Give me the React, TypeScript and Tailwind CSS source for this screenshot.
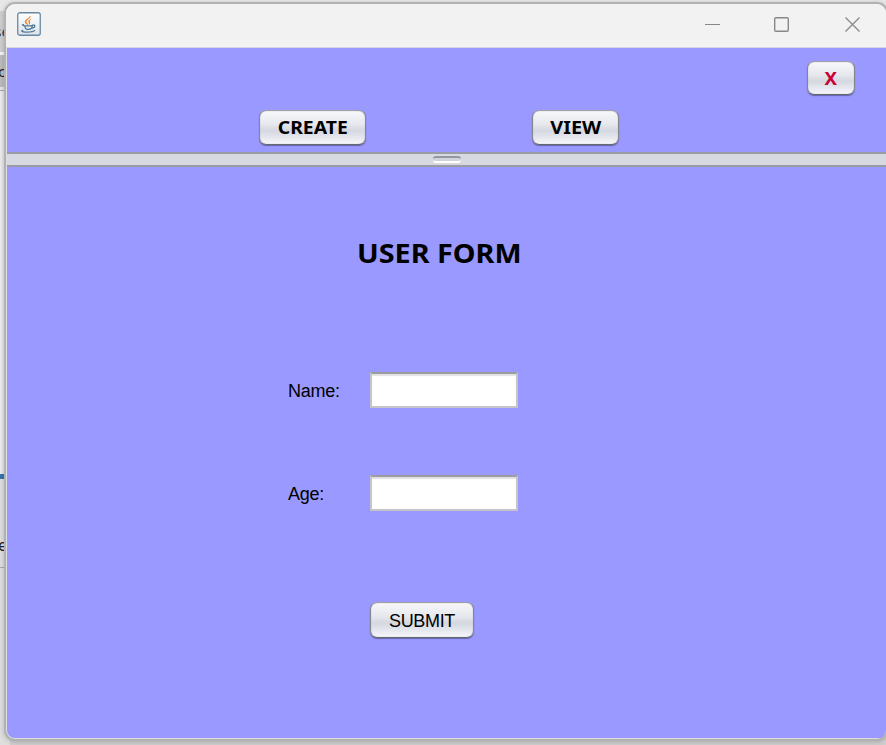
import React from "react";

const bevel =
  "flex items-center justify-center rounded-[7px] border-[1.5px] border-[#85878f] border-t-[#a0a1a8] border-b-[#666870] bg-[linear-gradient(180deg,#f8f8fa_0%,#e6e8ed_40%,#d5d8df_58%,#d9dce3_66%,#f5f7fc_100%)] shadow-[0_1px_1px_rgba(50,50,90,0.5),inset_0_0_1px_#9698a0] whitespace-nowrap text-black";
const tahoma = "font-['Noto_Sans',sans-serif] font-bold";
const arial = "font-['Liberation_Sans',Arial,sans-serif]";

function JavaIcon() {
  return (
    <svg width="24" height="24" viewBox="0 0 24 24" fill="none">
      <defs>
        <linearGradient id="tile" x1="0" y1="0" x2="0" y2="1">
          <stop offset="0" stopColor="#fff" />
          <stop offset="1" stopColor="#dce3e8" />
        </linearGradient>
      </defs>
      <rect x=".75" y=".75" width="22.5" height="22.5" rx="2" fill="url(#tile)" stroke="#6888a2" strokeWidth="1.3" />
      <path d="M13.300 4c.5 3-4.600 3.400-4 6 .2 1.100 1.300 1.700 1.600 2.700-2-1-3.300-2.100-2.700-3.800C8.800 7.200 12.500 6.600 13.300 4Z" fill="#ed7d28" stroke="#ed7d28" strokeWidth=".5" />
      <path d="M14.400 7.100c-2 .6-3.600 1.600-3 3 .4.800 1 1.200.4 2.600 1.800-1 1.600-2.200 1-2.900-.4-.9.600-1.700 1.600-2.700Z" fill="#ed7d28" />
      <path d="M6.500 12.500c-1.800.3-1.200 1.100.8 1.300 2.500.3 5.900.1 8.400-.5M7.800 14.500c.3 2 .8 2.600 2.200 2.800 1.600.2 3.400 0 4.200-.8.600-.6.900-1.500 1.100-2.600M15.600 13.200c2.600-.9 3.400 2-.5 3M5.700 18.400c-1.900.6-.8 1.500 3.100 1.700 3.900.1 7.900-.4 8.900-1.700" stroke="#4c7899" strokeWidth="1.250" strokeLinecap="round" />
    </svg>
  );
}

function Field({ label, gap }: { label: string; gap: string }) {
  return (
    <div className={`flex h-[36px] items-center pl-[281px] ${gap}`}>
      <label className={`${arial} w-[82px] pt-px text-[18px] leading-[20px] tracking-[-0.25px] text-black`}>{label}</label>
      <input
        aria-label={label}
        className="h-[36px] w-[148px] border-2 border-[#c5c5c9] border-t-[#9c9ca0] bg-white shadow-[inset_0_2px_1px_#e2e2e2] outline-none"
      />
    </div>
  );
}

export default function App() {
  return (
    <div className="relative h-[745px] w-[886px] overflow-hidden bg-[linear-gradient(180deg,#e7e7e7_0%,#e7e7e7_94%,#cfcfcf_100%)]">
      <div className="flex h-full w-[10px] flex-col overflow-hidden bg-[#dedede] font-['Noto_Sans',sans-serif] text-[15px] text-[#222]">
        <div className="h-[11px] shrink-0 bg-[#e7e7e7]" />
        <div className="flex h-[41px] shrink-0 items-center justify-end bg-[#cfcfcf] text-[#34364c]">se</div>
        <div className="h-[3px] shrink-0 bg-[#f4f4f4]" />
        <div className="flex h-[32px] shrink-0 items-center bg-[#bcbcbc]"><span className="-ml-[2px]">c</span></div>
        <div className="h-[4px] shrink-0 border-b border-[#aaa] bg-[#e4e4e4]" />
        <div className="h-[383px] shrink-0 bg-[linear-gradient(90deg,#efefef,#d0d0d0)]" />
        <div className="h-[5px] shrink-0 bg-[#3475af]" />
        <div className="flex h-[89px] shrink-0 items-end border-b border-[#aaa] pb-[10px] text-[16px]"><span className="-ml-[2px]">e</span></div>
      </div>

      <main className="absolute left-[4px] top-[2px] flex h-[739px] w-[884px] flex-col overflow-hidden rounded-[11px] border-2 border-[#b2b2b2] bg-[#dcdce4] pb-px pl-px shadow-[0_1px_5px_rgba(0,0,0,0.2)]">
        <header className="-ml-px flex h-[44px] shrink-0 items-start justify-between border-b border-[#d5d5df] bg-[#f2f2f2] pl-[11px] pr-[25px] pt-[8px]">
          <JavaIcon />
          <svg width="156" height="20" viewBox="0 0 156 20" fill="none" stroke="#888" className="mt-[3px]">
            <path d="M0 9.500h15" />
            <rect x="69.700" y="2.700" width="13.600" height="13.600" rx="1.200" strokeWidth="1.400" />
            <path d="m140.500 2.500 14 14m0-14-14 14" strokeWidth="1.300" />
          </svg>
        </header>

        <section className="h-[104px] shrink-0 bg-[#9999ff] pt-[13px]">
          <div className="flex justify-end pr-[31px]">
            <button className={`${bevel} ${tahoma} h-[34px] w-[48px] pt-px text-[17px] !text-[#cc0033]`}><span className="scale-x-[1.1]">X</span></button>
          </div>
          <div className="flex pl-[252px] pt-[15px]">
            <button className={`${bevel} ${tahoma} h-[35px] w-[107px] pt-px text-[17px]`}><span className="scale-x-[1.14]">CREATE</span></button>
            <button className={`${bevel} ${tahoma} ml-[166px] h-[35px] w-[87px] pt-px text-[17px]`}><span className="scale-x-[1.17]">VIEW</span></button>
          </div>
        </section>

        <div className="flex h-[15px] shrink-0 justify-center border-y-2 border-[#9a9ba5] bg-[#d6d9df] pt-[2px]">
          <div className="h-[7px] w-[28px] rounded-[3px] border-b-2 border-t-2 border-b-white border-t-[#9497a1] bg-[#d0d3da]" />
        </div>

        <form className="flex grow flex-col rounded-bl-[8px] bg-[#9999ff]">
          <h1 className={`${tahoma} mt-[67px] h-[38px] origin-left pl-[350px] text-[27px] leading-[38px] text-black`}><span className="inline-block origin-left scale-x-[1.065]">USER FORM</span></h1>
          <Field label="Name:" gap="mt-[100px]" />
          <Field label="Age:" gap="mt-[67px]" />
          <div className="mt-[91px] pl-[363px]">
            <button type="button" className={`${bevel} ${arial} h-[36px] w-[104px] pt-[3px] text-[18px] tracking-[-0.35px]`}>SUBMIT</button>
          </div>
        </form>
      </main>
    </div>
  );
}
